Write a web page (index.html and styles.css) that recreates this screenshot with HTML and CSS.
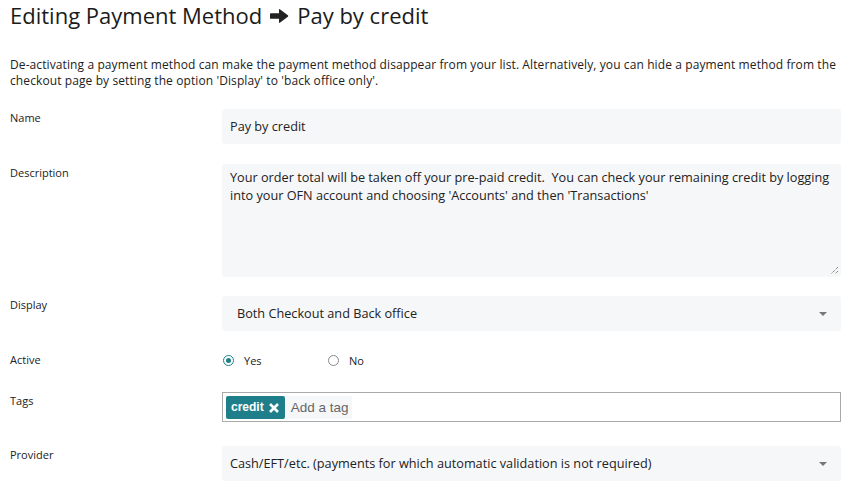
FILE: index.html
```html
<!DOCTYPE html>
<html>
<head>
<meta charset="utf-8">
<link rel="stylesheet" href="styles.css">
</head>
<body>
<div class="page">
  <h1 class="title">Editing Payment Method
    <svg class="arrow" viewBox="0 0 20 16" width="19" height="16"><path d="M1 5 H9.5 V1.5 Q9.5 0.2 10.7 1.1 L18.8 7.2 Q19.8 8 18.8 8.8 L10.7 14.9 Q9.5 15.8 9.5 14.5 V11 H1 Q0 11 0 10 V6 Q0 5 1 5 Z" fill="#222"/></svg>
    Pay by credit</h1>
  <p class="intro">De-activating a payment method can make the payment method disappear from your list. Alternatively, you can hide a payment method from the checkout page by setting the option 'Display' to 'back office only'.</p>

  <div class="row row-name">
    <div class="label">Name</div>
    <div class="field"><div class="input">Pay by credit</div></div>
  </div>

  <div class="row row-desc">
    <div class="label">Description</div>
    <div class="field">
      <div class="textarea">Your order total will be taken off your pre-paid credit.&nbsp; You can check your remaining credit by logging into your OFN account and choosing 'Accounts' and then 'Transactions'
        <svg class="grip" viewBox="0 0 10 10" width="10" height="10"><path d="M9 2 L2 9 M9 6 L6 9" stroke="#555" stroke-width="1" stroke-dasharray="1 1"/></svg>
      </div>
    </div>
  </div>

  <div class="row row-display">
    <div class="label">Display</div>
    <div class="field"><div class="select select-display">Both Checkout and Back office<span class="caret"></span></div></div>
  </div>

  <div class="row row-active">
    <div class="label">Active</div>
    <div class="field radios">
      <span class="radio-opt"><span class="radio on"></span>Yes</span>
      <span class="radio-opt"><span class="radio"></span>No</span>
    </div>
  </div>

  <div class="row row-tags">
    <div class="label">Tags</div>
    <div class="field">
      <div class="tags">
        <span class="tag">credit <svg class="x" viewBox="0 0 12 12" width="12" height="12"><path d="M2 2 L10 10 M10 2 L2 10" stroke="#fff" stroke-width="2.6" stroke-linecap="butt"/></svg></span>
        <span class="add">Add a tag</span>
      </div>
    </div>
  </div>

  <div class="row row-provider">
    <div class="label">Provider</div>
    <div class="field"><div class="select">Cash/EFT/etc. (payments for which automatic validation is not required)<span class="caret"></span></div></div>
  </div>
</div>
</body>
</html>
```

FILE: styles.css
```css
* { box-sizing: border-box; }
html, body { margin: 0; padding: 0; background: #fff; }
body {
  font-family: "Open Sans", "Liberation Sans", sans-serif;
  color: #222;
}
.page { padding: 0 24px 0 10px; }
.title {
  margin: 0;
  padding-top: 0;
  font-size: 22px;
  font-weight: 400;
  line-height: 30px;
  color: #1b1b1b;
  display: flex;
  align-items: center;
  gap: 6px;
}
.arrow { margin: 0 2px 0 2px; position: relative; top: 1px; }
.intro {
  margin: 27px 0 0 0;
  font-size: 12px;
  line-height: 16px;
  letter-spacing: 0.1px;
}
.row { display: flex; }
.label {
  width: 212px;
  flex: none;
  font-size: 11px;
  padding-top: 1px;
  line-height: 15px;
}
.field { flex: 1; }
.input, .select, .textarea {
  background: #f6f7f9;
  border-radius: 3px;
  font-size: 12.7px;
  color: #222;
}
.input { height: 35px; line-height: 35px; padding-left: 8px; }
.row-name { margin-top: 20px; }
.row-desc { margin-top: 20px; }
.textarea {
  height: 113px;
  padding: 4px 8px;
  line-height: 18px;
  position: relative;
}
.grip { position: absolute; right: 2px; bottom: 2px; }
.row-display { margin-top: 19px; }
.select {
  height: 35px;
  line-height: 35px;
  padding-left: 8px;
  position: relative;
}
.select-display { padding-left: 15px; }
.caret {
  position: absolute;
  right: 14px;
  top: 16px;
  width: 0; height: 0;
  border-left: 4px solid transparent;
  border-right: 4px solid transparent;
  border-top: 4px solid #777;
}
.row-active { margin-top: 19px; height: 20px; }
.row-active .label { padding-top: 2px; }
.radios { display: flex; align-items: center; font-size: 11px; padding-left: 1px; }
.radio-opt { display: flex; align-items: center; width: 105px; }
.radio {
  width: 11px; height: 11px;
  border-radius: 50%;
  border: 1px solid #888;
  margin-right: 10px;
  background: #fff;
  position: relative;
}
.radio.on { border-color: #1e7f8a; }
.radio.on::after {
  content: "";
  position: absolute;
  left: 2px; top: 2px;
  width: 5px; height: 5px;
  border-radius: 50%;
  background: #1e7f8a;
}
.row-tags { margin-top: 22px; }
.tags {
  height: 30px;
  border: 1px solid #a9a9a9;
  display: flex;
  align-items: center;
  padding-left: 3px;
  gap: 1px;
  font-family: "Liberation Sans", Arial, sans-serif;
}
.tag {
  background: #1e7f8a;
  color: #fff;
  font-weight: 700;
  font-size: 12px;
  height: 23px;
  padding: 0 5px;
  border-radius: 2px;
  display: inline-flex;
  align-items: center;
  gap: 4px;
}
.x { position: relative; top: 1px; }
.add {
  background: #f6f7f9;
  color: #666;
  font-size: 13.5px;
  height: 23px;
  line-height: 23px;
  padding: 0 4px 0 5px;
}
.row-provider { margin-top: 24px; }
```
